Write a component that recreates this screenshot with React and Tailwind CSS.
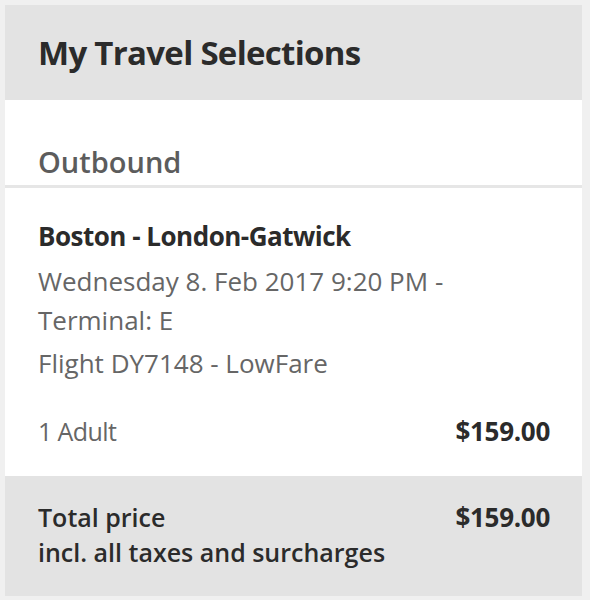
export default function App() {
  return (
    <div className="min-h-[600px] bg-[#f0f0f0] pl-[5px] pr-[8px] pt-[5px] font-['Open_Sans',sans-serif]">
      <div className="flex h-[95px] items-center bg-[#e3e3e3] px-[33px]">
        <h1 className="text-[33px] font-bold tracking-[-0.7px] text-[#2b2b2b]">My Travel Selections</h1>
      </div>

      <div className="flex h-[85px] items-end bg-white px-[33px] pb-[2px]">
        <h2 className="text-[29px] font-semibold text-[#5c5c5c]">Outbound</h2>
      </div>
      <div className="h-[3px] bg-[#e6e6e6]" />

      <div className="bg-white pl-[33px] pr-[32px] pt-[30px] pb-[25px]">
        <div className="text-[26px] font-bold leading-[36px] tracking-[-0.5px] text-[#2b2b2b]">Boston - London-Gatwick</div>
        <div className="mt-[8px] text-[26px] leading-[39px] text-[#666]">
          Wednesday 8. Feb 2017 9:20 PM -<br />Terminal: E
        </div>
        <div className="mt-[4px] text-[26px] leading-[39px] text-[#666]">Flight DY7148 - LowFare</div>
        <div className="mt-[29px] flex items-center justify-between leading-[39px]">
          <span className="text-[25px] tracking-[-0.6px] text-[#666]">1 Adult</span>
          <span className="text-[26px] font-bold tracking-[-0.3px] text-[#2b2b2b]">$159.00</span>
        </div>
      </div>

      <div className="flex h-[120px] justify-between bg-[#e3e3e3] pl-[33px] pr-[32px] pt-[24px] text-[25px] font-semibold leading-[35px] text-[#2b2b2b]">
        <div>
          Total price
          <br />
          incl. all taxes and surcharges
        </div>
        <div className="text-[26px] font-bold tracking-[-0.3px]">$159.00</div>
      </div>
    </div>
  );
}
